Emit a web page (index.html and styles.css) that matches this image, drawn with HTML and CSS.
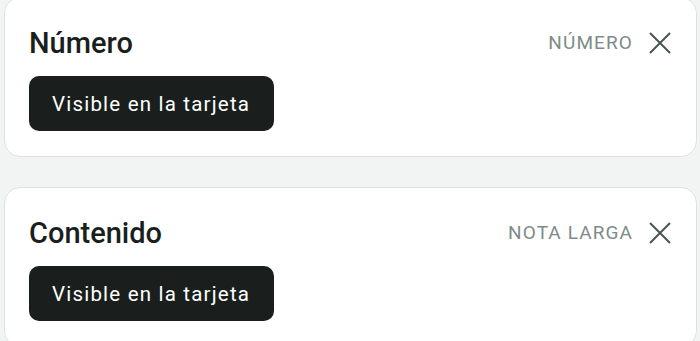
FILE: index.html
```html
<!DOCTYPE html>
<html lang="es">
<head>
<meta charset="utf-8">
<link rel="stylesheet" href="styles.css">
</head>
<body>
<div class="list">
  <section class="card">
    <div class="head">
      <h2 class="title">Número</h2>
      <div class="meta">
        <span class="type">NÚMERO</span>
        <button class="close" aria-label="Cerrar">
          <svg viewBox="0 0 22 22" width="22" height="22"><path d="M1 1L21 21M21 1L1 21" stroke="currentColor" stroke-width="2" fill="none"/></svg>
        </button>
      </div>
    </div>
    <div class="chip">Visible en la tarjeta</div>
  </section>
  <section class="card">
    <div class="head">
      <h2 class="title">Contenido</h2>
      <div class="meta">
        <span class="type">NOTA LARGA</span>
        <button class="close" aria-label="Cerrar">
          <svg viewBox="0 0 22 22" width="22" height="22"><path d="M1 1L21 21M21 1L1 21" stroke="currentColor" stroke-width="2" fill="none"/></svg>
        </button>
      </div>
    </div>
    <div class="chip">Visible en la tarjeta</div>
  </section>
</div>
</body>
</html>
```
FILE: styles.css
```css
html, body {
  margin: 0;
  padding: 0;
  background: #f2f4f3;
  overflow: hidden;
}
body {
  font-family: Roboto, "Noto Sans", sans-serif;
  width: 700px;
  height: 341px;
}
.list {
  display: flex;
  flex-direction: column;
  gap: 30px;
  margin-top: -3px;
  padding: 0 3px 0 4px;
}
.card {
  background: #ffffff;
  border: 1px solid #dde2e0;
  border-radius: 16px;
  padding: 27px 24px 25px 24px;
  display: flex;
  flex-direction: column;
  align-items: flex-start;
  gap: 15px;
}
.head {
  align-self: stretch;
  display: flex;
  align-items: center;
  justify-content: space-between;
}
.title {
  margin: 0;
  font-size: 29px;
  line-height: 36px;
  font-weight: 500;
  color: #1a1f1e;
}
.meta {
  display: flex;
  align-items: center;
  gap: 16px;
}
.type {
  font-size: 19px;
  line-height: 24px;
  letter-spacing: 1.1px;
  color: #7e8b87;
}
.close {
  border: 0;
  background: none;
  padding: 0;
  margin-right: 1px;
  width: 22px;
  height: 22px;
  color: #4a5552;
  display: flex;
}
.chip {
  background: #1a1f1e;
  color: #ffffff;
  border-radius: 10px;
  padding: 16px 24px 15px 23px;
  font-size: 20.5px;
  line-height: 24px;
  letter-spacing: 1.2px;
}
```
